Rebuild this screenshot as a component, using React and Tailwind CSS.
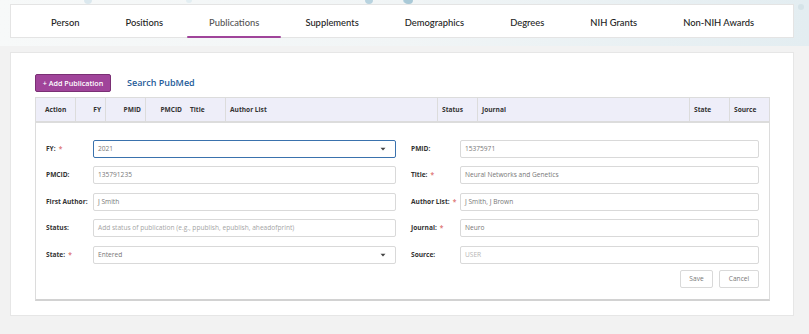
import { useState } from 'react';

const tabs = ['Person', 'Positions', 'Publications', 'Supplements', 'Demographics', 'Degrees', 'NIH Grants', 'Non-NIH Awards'];

const columns = [
  { label: 'Action', w: 'w-[40px]', align: 'text-left pl-[9px]', border: true },
  { label: 'FY', w: 'w-[30px]', align: 'text-right pr-[4px]', border: true },
  { label: 'PMID', w: 'w-[40px]', align: 'text-right pr-[4px]', border: true },
  { label: 'PMCID', w: 'w-[40px]', align: 'text-right pr-[4px]', border: false },
  { label: 'Title', w: 'w-[40px]', align: 'text-left pl-[4px]', border: true },
  { label: 'Author List', w: 'w-[212px]', align: 'text-left pl-[4px]', border: true },
  { label: 'Status', w: 'w-[40px]', align: 'text-left pl-[4px]', border: true },
  { label: 'Journal', w: 'w-[212px]', align: 'text-left pl-[4px]', border: true },
  { label: 'State', w: 'w-[40px]', align: 'text-left pl-[4px]', border: true },
  { label: 'Source', w: 'flex-1', align: 'text-left pl-[4px]', border: false },
];

function Label({ text, required, width }) {
  return (
    <div className={`${width} shrink-0 whitespace-nowrap text-[6.6px] font-bold text-[#333]`}>
      {text}
      {required && <span className="ml-[3px] text-[#e07a7a]">*</span>}
    </div>
  );
}

function Field({ value, placeholder, focused, select, disabled }) {
  const border = focused ? 'border-[#3a72ad]' : 'border-[#d9d9d9]';
  return (
    <div className={`flex h-[18px] flex-1 items-center justify-between whitespace-nowrap rounded-[2px] border ${border} bg-white px-[4px] text-[6.6px]`}>
      <span className={value ? (disabled ? 'text-[#b5b5b5]' : 'text-[#777]') : 'text-[#a5a5a5]'}>
        {value || placeholder}
      </span>
      {select && (
        <svg width="6" height="4" viewBox="0 0 6 4" className="mr-[5px]">
          <path d="M0.5 0.8 L5.5 0.8 L3 3.4 Z" fill="#444" />
        </svg>
      )}
    </div>
  );
}

export default function App() {
  const [active] = useState('Publications');

  return (
    <div className="relative min-h-[334px] w-[809px] overflow-hidden bg-[#f2f2f2] font-['Open_Sans',sans-serif]">
      {/* faint banner image behind the tabs */}
      <div className="absolute left-0 top-0 h-[46px] w-full bg-gradient-to-r from-[#f7f9f9] via-[#f1f5f6] to-[#e3edf1]" />
      <div className="absolute left-[84px] top-[-4px] h-[8px] w-[8px] rounded-full bg-[#dbe8ee]" />
      <div className="absolute left-[186px] top-[-3px] h-[6px] w-[6px] rounded-full bg-[#e3eef2]" />
      <div className="absolute left-[365px] top-[-4px] h-[8px] w-[8px] rounded-full bg-[#b8d3df]" />
      <div className="absolute left-[403px] top-[-3px] h-[6px] w-[6px] rounded-full bg-[#bcd6e1]" />
      <div className="absolute left-[404px] top-[-4px] h-[8px] w-[9px] rounded-full bg-[#a9c9d7]" />
      <div className="absolute left-[798px] top-[4px] h-[6px] w-[6px] rounded-full bg-[#d5e3e8]" />

      <div className="relative px-[10px] pt-[4px]">
        {/* tab bar */}
        <div className="mr-[5px] flex h-[34px] items-stretch gap-[2px] border border-[#e4e4e4] bg-white pl-[18px] font-['Lato',sans-serif]">
          {tabs.map((t) => (
            <div
              key={t}
              className={`relative flex items-center whitespace-nowrap px-[22px] pt-[4px] text-[9.4px] font-medium ${t === active ? 'text-[#555]' : 'text-[#222]'}`}
            >
              {t}
              {t === active && <div className="absolute bottom-[-1px] left-0 right-0 h-[2px] rounded-full bg-[#a0449a]" />}
            </div>
          ))}
        </div>

        {/* main card */}
        <div className="mr-[5px] mt-[14px] h-[264px] border border-[#e6e6e6] bg-white pl-[24px] pr-[23px] pt-[21px]">
          <div className="flex items-center gap-[16px]">
            <button className="h-[18px] w-[76px] whitespace-nowrap rounded-[2px] border border-[#7a2f74] bg-[#a0449a] text-[7.2px] font-semibold text-white">
              + Add Publication
            </button>
            <span className="text-[9px] font-semibold text-[#1f5c99]">Search PubMed</span>
          </div>

          <div className="mt-[5px] border border-b-2 border-[#dcdcdc] border-b-[#d2d2d2]">
            {/* header */}
            <div className="flex h-[25px] border-b-2 border-[#dcdcdc] bg-[#eeeef9]">
              {columns.map((c) => (
                <div
                  key={c.label}
                  className={`flex items-center ${c.w} ${c.align} ${c.border ? 'border-r border-[#dcdcdc]' : ''} whitespace-nowrap text-[6.6px] font-bold text-[#333]`}
                >
                  <span className="w-full">{c.label}</span>
                </div>
              ))}
            </div>

            {/* inline edit form */}
            <div className="flex gap-[15px] pb-[11px] pl-[10px] pr-[10px] pt-[16.5px]">
              <div className="flex w-[350px] flex-col gap-[8.5px]">
                <div className="flex items-center">
                  <Label text="FY:" required width="w-[47px]" />
                  <Field value="2021" focused select />
                </div>
                <div className="flex items-center">
                  <Label text="PMCID:" width="w-[47px]" />
                  <Field value="135791235" />
                </div>
                <div className="flex items-center">
                  <Label text="First Author:" width="w-[47px]" />
                  <Field value="J Smith" />
                </div>
                <div className="flex items-center">
                  <Label text="Status:" width="w-[47px]" />
                  <Field placeholder="Add status of publication (e.g., ppublish, epublish, aheadofprint)" />
                </div>
                <div className="flex items-center">
                  <Label text="State:" required width="w-[47px]" />
                  <Field value="Entered" select />
                </div>
              </div>

              <div className="flex flex-1 flex-col gap-[8.5px]">
                <div className="flex items-center">
                  <Label text="PMID:" width="w-[49px]" />
                  <Field value="15375971" />
                </div>
                <div className="flex items-center">
                  <Label text="Title:" required width="w-[49px]" />
                  <Field value="Neural Networks and Genetics" />
                </div>
                <div className="flex items-center">
                  <Label text="Author List:" required width="w-[49px]" />
                  <Field value="J Smith, J Brown" />
                </div>
                <div className="flex items-center">
                  <Label text="Journal:" required width="w-[49px]" />
                  <Field value="Neuro" />
                </div>
                <div className="flex items-center">
                  <Label text="Source:" width="w-[49px]" />
                  <Field value="USER" disabled />
                </div>
                <div className="-mt-[2.5px] flex justify-end gap-[6px]">
                  <button className="h-[18px] w-[33px] rounded-[2px] border border-[#d9d9d9] bg-white text-[6.6px] text-[#777]">Save</button>
                  <button className="h-[18px] w-[40px] rounded-[2px] border border-[#d9d9d9] bg-white text-[6.6px] text-[#777]">Cancel</button>
                </div>
              </div>
            </div>
          </div>
        </div>
      </div>
    </div>
  );
}
